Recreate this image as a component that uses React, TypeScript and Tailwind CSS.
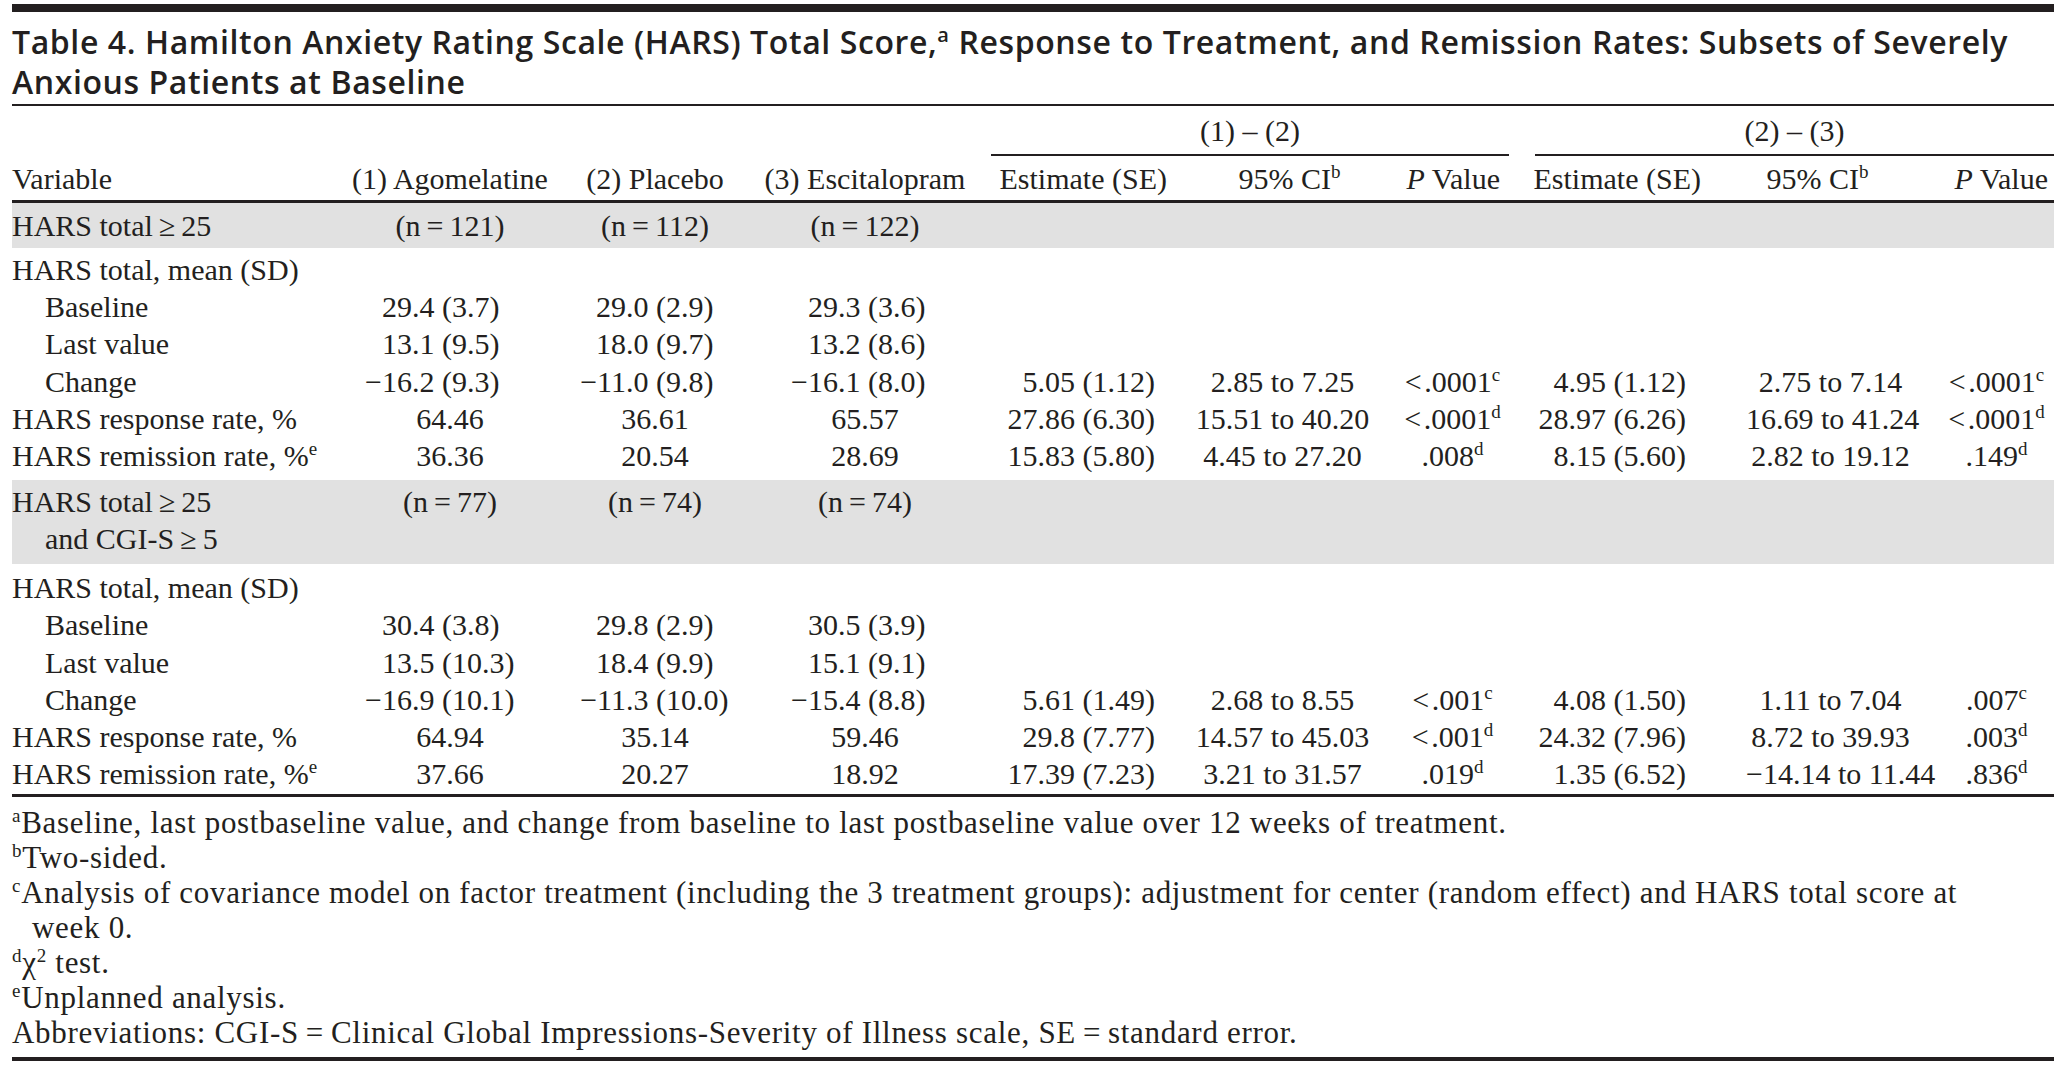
import React from "react";

const COLS =
  "grid grid-cols-[333px_210px_200px_220px_205px_205px_133px_202px_195px_139px]";

function Sup({ children }: { children: React.ReactNode }) {
  return (
    <sup className="text-[19px] leading-none -top-[11px]">{children}</sup>
  );
}

function Mean({ v, pl }: { v: string; pl: string }) {
  const idx = v.indexOf(".");
  const a = v.slice(0, idx);
  const b = v.slice(idx);
  return (
    <div className={"whitespace-nowrap " + pl}>
      <span className="inline-block w-[60px] text-right">{a}</span>
      <span>{b}</span>
    </div>
  );
}

type Row = {
  label: React.ReactNode;
  indent?: boolean;
  kind?: "mean" | "center";
  g?: [string, string, string];
  est1?: string;
  ci1?: string;
  p1?: React.ReactNode;
  est2?: string;
  ci2?: string;
  p2?: React.ReactNode;
};

function DataRow({ r }: { r: Row }) {
  const pls = ["pl-[7px]", "pl-[11px]", "pl-[23px]"];
  return (
    <div className={COLS + " h-[37.2px] leading-[37.2px] whitespace-nowrap"}>
      <div className={r.indent ? "pl-[33px]" : ""}>{r.label}</div>
      {[0, 1, 2].map((i) =>
        r.g ? (
          r.kind === "mean" ? (
            <Mean key={i} v={r.g[i]} pl={pls[i]} />
          ) : (
            <div key={i} className="text-center">
              {r.g[i]}
            </div>
          )
        ) : (
          <div key={i} />
        )
      )}
      <div className="text-right pr-[25px]">{r.est1 ?? ""}</div>
      <div className="text-center">{r.ci1 ?? ""}</div>
      <div className="text-center pl-[2px]">{r.p1 ?? ""}</div>
      <div className="text-right pr-[34px]">{r.est2 ?? ""}</div>
      <div className="text-center pl-[26px]">{r.ci2 ?? ""}</div>
      <div className="text-center pl-[24px]">{r.p2 ?? ""}</div>
    </div>
  );
}

const M = "\u2212";
const T = "\u2009";
const H = "\u200a";

const sec1: Row[] = [
  { label: "HARS total, mean (SD)" },
  { label: "Baseline", indent: true, kind: "mean", g: ["29.4 (3.7)", "29.0 (2.9)", "29.3 (3.6)"] },
  { label: "Last value", indent: true, kind: "mean", g: ["13.1 (9.5)", "18.0 (9.7)", "13.2 (8.6)"] },
  {
    label: "Change",
    indent: true,
    kind: "mean",
    g: [M + "16.2 (9.3)", M + "11.0 (9.8)", M + "16.1 (8.0)"],
    est1: "5.05 (1.12)",
    ci1: "2.85 to 7.25",
    p1: <>{"<" + H + ".0001"}<Sup>c</Sup></>,
    est2: "4.95 (1.12)",
    ci2: "2.75 to 7.14",
    p2: <>{"<" + H + ".0001"}<Sup>c</Sup></>,
  },
  {
    label: "HARS response rate, %",
    kind: "center",
    g: ["64.46", "36.61", "65.57"],
    est1: "27.86 (6.30)",
    ci1: "15.51 to 40.20",
    p1: <>{"<" + H + ".0001"}<Sup>d</Sup></>,
    est2: "28.97 (6.26)",
    ci2: "16.69 to 41.24",
    p2: <>{"<" + H + ".0001"}<Sup>d</Sup></>,
  },
  {
    label: <>HARS remission rate, %<Sup>e</Sup></>,
    kind: "center",
    g: ["36.36", "20.54", "28.69"],
    est1: "15.83 (5.80)",
    ci1: "4.45 to 27.20",
    p1: <>.008<Sup>d</Sup></>,
    est2: "8.15 (5.60)",
    ci2: "2.82 to 19.12",
    p2: <>.149<Sup>d</Sup></>,
  },
];

const sec2: Row[] = [
  { label: "HARS total, mean (SD)" },
  { label: "Baseline", indent: true, kind: "mean", g: ["30.4 (3.8)", "29.8 (2.9)", "30.5 (3.9)"] },
  { label: "Last value", indent: true, kind: "mean", g: ["13.5 (10.3)", "18.4 (9.9)", "15.1 (9.1)"] },
  {
    label: "Change",
    indent: true,
    kind: "mean",
    g: [M + "16.9 (10.1)", M + "11.3 (10.0)", M + "15.4 (8.8)"],
    est1: "5.61 (1.49)",
    ci1: "2.68 to 8.55",
    p1: <>{"<" + H + ".001"}<Sup>c</Sup></>,
    est2: "4.08 (1.50)",
    ci2: "1.11 to 7.04",
    p2: <>.007<Sup>c</Sup></>,
  },
  {
    label: "HARS response rate, %",
    kind: "center",
    g: ["64.94", "35.14", "59.46"],
    est1: "29.8 (7.77)",
    ci1: "14.57 to 45.03",
    p1: <>{"<" + H + ".001"}<Sup>d</Sup></>,
    est2: "24.32 (7.96)",
    ci2: "8.72 to 39.93",
    p2: <>.003<Sup>d</Sup></>,
  },
  {
    label: <>HARS remission rate, %<Sup>e</Sup></>,
    kind: "center",
    g: ["37.66", "20.27", "18.92"],
    est1: "17.39 (7.23)",
    ci1: "3.21 to 31.57",
    p1: <>.019<Sup>d</Sup></>,
    est2: "1.35 (6.52)",
    ci2: M + "14.14 to 11.44",
    p2: <>.836<Sup>d</Sup></>,
  },
];

export default function App() {
  return (
    <div className="w-[2066px] h-[1066px] bg-white text-[#231f20] overflow-hidden">
      <div className="ml-[12px] w-[2042px]">
        <div className="pt-[4px]">
          <div className="h-[8px] bg-[#231f20]" />
        </div>
        <div className="mt-[10px] font-['Open_Sans',sans-serif] font-semibold text-[32px] leading-[40px] whitespace-nowrap tracking-[0.6px]">
          <div className="h-[40px]">
            Table 4. Hamilton Anxiety Rating Scale (HARS) Total Score,
            <sup className="text-[20px] -top-[12px]">a</sup> Response to Treatment, and
            Remission Rates: Subsets of Severely
          </div>
          <div className="h-[40px]">Anxious Patients at Baseline</div>
        </div>
        <div className="mt-[2px] h-[2px] bg-[#231f20]" />

        <div className="font-['Liberation_Serif',serif] text-[30px]">
          {/* group header */}
          <div className={COLS}>
            <div className="col-span-4" />
            <div className="col-span-3">
              <div className="ml-[16px] mr-[9px] border-b-2 border-[#231f20] pt-[6px] pb-[5px] leading-[37px] text-center">
                (1) – (2)
              </div>
            </div>
            <div className="col-span-3">
              <div className="ml-[17px] border-b-2 border-[#231f20] pt-[6px] pb-[5px] leading-[37px] text-center">
                (2) – (3)
              </div>
            </div>
          </div>
          {/* column header */}
          <div className={COLS + " pt-[4px] pb-[3px] leading-[37px] whitespace-nowrap border-b-[3px] border-[#231f20]"}>
            <div>Variable</div>
            <div className="text-center">(1) Agomelatine</div>
            <div className="text-center">(2) Placebo</div>
            <div className="text-center">(3) Escitalopram</div>
            <div className="text-right pr-[13px]">Estimate (SE)</div>
            <div className="text-center pl-[14px]">
              95% CI<Sup>b</Sup>
            </div>
            <div className="text-right pr-[18px]">
              <i>P</i> Value
            </div>
            <div className="text-right pr-[19px]">Estimate (SE)</div>
            <div className="text-center">
              95% CI<Sup>b</Sup>
            </div>
            <div className="text-right pr-[6px]">
              <i>P</i> Value
            </div>
          </div>

          {/* section 1 band */}
          <div className={COLS + " h-[45px] pt-[4px] leading-[37px] bg-[#e1e1e1] whitespace-nowrap"}>
            <div>HARS total{T}≥{T}25</div>
            <div className="text-center">(n{T}={T}121)</div>
            <div className="text-center">(n{T}={T}112)</div>
            <div className="text-center">(n{T}={T}122)</div>
          </div>
          <div className="pt-[3px]">
            {sec1.map((r, i) => (
              <DataRow key={i} r={r} />
            ))}
          </div>

          {/* section 2 band */}
          <div className={COLS + " mt-[6px] h-[84px] pt-[3px] leading-[37px] bg-[#e1e1e1] whitespace-nowrap"}>
            <div>
              <div>HARS total{T}≥{T}25</div>
              <div className="pl-[33px]">and CGI-S{T}≥{T}5</div>
            </div>
            <div className="text-center">(n{T}={T}77)</div>
            <div className="text-center">(n{T}={T}74)</div>
            <div className="text-center">(n{T}={T}74)</div>
          </div>
          <div className="pt-[5px]">
            {sec2.map((r, i) => (
              <DataRow key={i} r={r} />
            ))}
          </div>

          <div className="mt-[2px] h-[3px] bg-[#231f20]" />

          {/* footnotes */}
          <div className="pt-[8px] leading-[35px] whitespace-nowrap text-[31px] tracking-[0.7px]">
            <div>
              <Sup>a</Sup>Baseline, last postbaseline value, and change from baseline to last postbaseline
              value over 12 weeks of treatment.
            </div>
            <div>
              <Sup>b</Sup>Two-sided.
            </div>
            <div>
              <Sup>c</Sup>Analysis of covariance model on factor treatment (including the 3 treatment
              groups): adjustment for center (random effect) and HARS total score at
            </div>
            <div className="pl-[20px]">week 0.</div>
            <div>
              <Sup>d</Sup>χ<Sup>2</Sup> test.
            </div>
            <div>
              <Sup>e</Sup>Unplanned analysis.
            </div>
            <div>
              Abbreviations: CGI-S{T}={T}Clinical Global Impressions-Severity of Illness scale, SE{T}={T}standard
              error.
            </div>
          </div>
          <div className="mt-[7px] h-[4px] bg-[#231f20]" />
        </div>
      </div>
    </div>
  );
}
